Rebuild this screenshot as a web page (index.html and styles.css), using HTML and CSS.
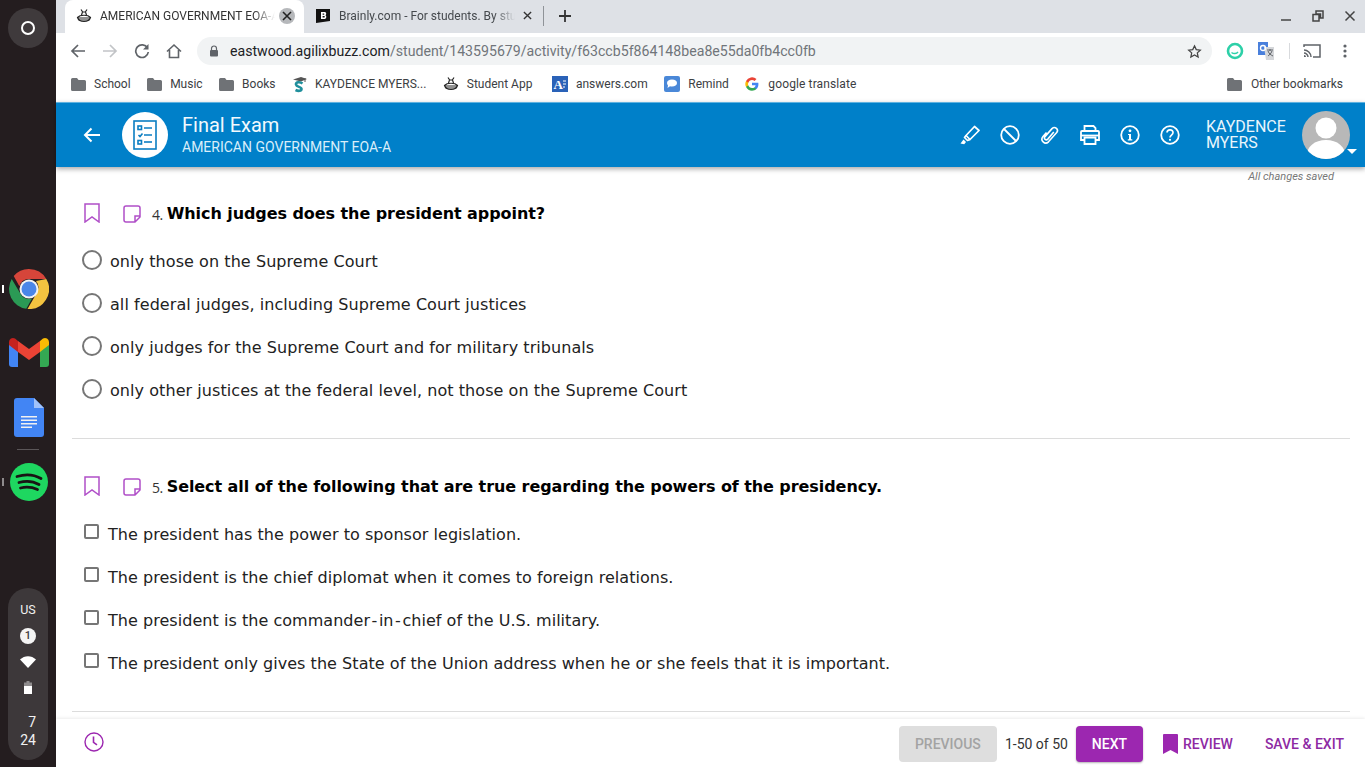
FILE: index.html
```html
<!DOCTYPE html>
<html lang="en">
<head>
<meta charset="utf-8">
<title>Final Exam</title>
<link rel="stylesheet" href="styles.css">
</head>
<body>
<div class="screen">
  <aside class="shelf">
    <div class="launcher"><span class="launcher-ring"></span></div>
    <div class="pinned">
      <div class="app app-chrome">
        <span class="run-dot run-bright"></span>
        <svg width="40" height="40" viewBox="0 0 40 40"><path d="M20 0a20 20 0 0 1 17.300 10H20a10 10 0 0 0-9.600 7.200L4.700 7A20 20 0 0 1 20 0z" fill="#d6453a"/><path d="M2.700 10l9.700 16.200A10 10 0 0 0 23 29.500l-5.700 10.300A20 20 0 0 1 2.700 10z" fill="#2b9a55"/><path d="M37.300 10A20 20 0 0 1 18.500 40l9-15.500A10 10 0 0 0 27 12z" fill="#f3c340"/><circle cx="20" cy="20" r="9.500" fill="#f2f2f2"/><circle cx="20" cy="20" r="7.500" fill="#4a86e8"/></svg>
      </div>
      <div class="app app-gmail">
        <svg width="40" height="30" viewBox="0 0 40 30"><path d="M0 6v21a3 3 0 0 0 3 3h6V13z" fill="#4285f4"/><path d="M31 13v17h6a3 3 0 0 0 3-3V6z" fill="#34a853"/><path d="M9 4v11l11 8 11-8V4l-11 8z" fill="#ea4335"/><path d="M0 5v3l9 7V4L6 1.500A4 4 0 0 0 0 5z" fill="#c5221f"/><path d="M31 4v11l9-7V5a4 4 0 0 0-6-3.500z" fill="#fbbc04"/></svg>
      </div>
      <div class="app app-docs">
        <svg width="30" height="39" viewBox="0 0 30 39"><path d="M3 0h17l10 10v26a3 3 0 0 1-3 3H3a3 3 0 0 1-3-3V3a3 3 0 0 1 3-3z" fill="#4285f4"/><path d="M20 0l10 10H20z" fill="#a1c2fa"/><path d="M7 18h16v1.500H7zM7 21.500h16V23H7zM7 25h16v1.500H7zM7 28.500h11V30H7z" fill="#f1f1f1"/></svg>
      </div>
      <div class="shelf-rule"></div>
      <div class="app app-spotify">
        <span class="run-dot"></span>
        <svg width="38" height="38" viewBox="0 0 38 38"><circle cx="19" cy="19" r="19" fill="#1ed760"/><path d="M7 13.500c8-2.500 17-2 24 2M9 19.500c7-2 14-1.500 20 2M10.500 25c6-1.500 11.500-1 17 1.500" fill="none" stroke="#191414" stroke-width="2.800" stroke-linecap="round"/></svg>
      </div>
    </div>
    <div class="status">
      <span class="status-us">US</span>
      <span class="status-badge">1</span>
      <svg class="status-wifi" width="16" height="12" viewBox="0 0 16 12"><path d="M0 3.500C4.500-1 11.500-1 16 3.500L8 12z" fill="#fff"/></svg>
      <svg class="status-batt" width="8" height="13" viewBox="0 0 8 13"><path d="M2.500 0h3v1.500H8V13H0V1.500h2.500z" fill="#8f8c8d"/><path d="M0 5h8v8H0z" fill="#fff"/></svg>
      <span class="status-time">7<br>24</span>
    </div>
  </aside>

  <div class="desktop">
    <div class="tabstrip">
      <div class="tab tab-active">
        <svg class="tab-icon" width="16" height="16" viewBox="0 0 16 16"><g fill="none" stroke="#222" stroke-width="1.200"><path d="M5 1.500l2 3M11 1.500l-2 3M5.500 7L6.500 4h3l1 3"/><path d="M1.500 9.500C4 6.500 12 6.500 14.500 9.500c-1 2.800-3.500 4-6.500 4s-5.500-1.200-6.500-4z"/><path d="M2 10h12M2.500 12h11"/></g></svg>
        <span class="tab-title">AMERICAN GOVERNMENT EOA-A</span>
        <span class="tab-close tab-close-hover">
          <svg width="10" height="10" viewBox="0 0 10 10"><path d="M1 1l8 8M9 1l-8 8" stroke="#222" stroke-width="1.600"/></svg>
        </span>
      </div>
      <div class="tab">
        <svg class="tab-icon" width="16" height="16" viewBox="0 0 16 16"><path d="M1 1h14v12l-14 2z" fill="#111"/><path d="M6 4h3.500c2 0 2.200 2.600.8 3.200 1.600.6 1.400 3.800-1 3.800H6zM7.600 5.500v1.200h1.200c.8 0 .8-1.200 0-1.200zM7.600 8v1.500h1.500c1 0 1-1.500 0-1.500z" fill="#fff"/></svg>
        <span class="tab-title tab-title-dim">Brainly.com - For students. By students.</span>
        <span class="tab-close">
          <svg width="10" height="10" viewBox="0 0 10 10"><path d="M1 1l8 8M9 1l-8 8" stroke="#333" stroke-width="1.500"/></svg>
        </span>
      </div>
      <span class="tab-sep"></span>
      <svg class="new-tab" width="14" height="14" viewBox="0 0 14 14"><path d="M7 1v12M1 7h12" stroke="#333" stroke-width="1.800"/></svg>
      <div class="window-controls">
        <svg width="12" height="12" viewBox="0 0 12 12"><path d="M1 10h10" stroke="#444" stroke-width="1.500"/></svg>
        <svg width="12" height="12" viewBox="0 0 12 12"><path d="M4 1h7v7H8.500V4H4zM1 4.500h6V11H1z" fill="none" stroke="#444" stroke-width="1.500"/></svg>
        <svg width="12" height="12" viewBox="0 0 12 12"><path d="M1.500 1.500l9 9M10.500 1.500l-9 9" stroke="#444" stroke-width="1.500"/></svg>
      </div>
    </div>

    <div class="toolbar">
      <svg class="nav-icon" width="16" height="16" viewBox="0 0 16 16"><path d="M15 8H2M8 2L2 8l6 6" fill="none" stroke="#5f6368" stroke-width="1.700"/></svg>
      <svg class="nav-icon" width="16" height="16" viewBox="0 0 16 16"><path d="M1 8h13M8 2l6 6-6 6" fill="none" stroke="#c2c4c7" stroke-width="1.700"/></svg>
      <svg class="nav-icon" width="16" height="16" viewBox="0 0 16 16"><path d="M13.500 5A6.300 6.300 0 1 0 14.300 9" fill="none" stroke="#5f6368" stroke-width="1.700"/><path d="M14.500 1v5.500H9z" fill="#5f6368"/></svg>
      <svg class="nav-icon" width="16" height="16" viewBox="0 0 16 16"><path d="M1 8.500L8 2l7 6.500M3.500 7v7.500h9V7" fill="none" stroke="#5f6368" stroke-width="1.600"/></svg>
      <div class="omnibox">
        <svg width="10" height="12" viewBox="0 0 10 12"><path d="M2.500 5V3.500a2.500 2.500 0 0 1 5 0V5" fill="none" stroke="#5f6368" stroke-width="1.200"/><rect x="1" y="5" width="8" height="6.500" rx="1" fill="#5f6368"/></svg>
        <span class="url"><span class="url-host">eastwood.agilixbuzz.com</span>/student/143595679/activity/f63ccb5f864148bea8e55da0fb4cc0fb</span>
        <svg class="star" width="15" height="15" viewBox="0 0 24 24"><path d="M12 3l2.800 6 6.500.8-4.800 4.400 1.300 6.500L12 17.400l-5.800 3.300 1.300-6.500-4.800-4.400 6.500-.8z" fill="none" stroke="#444" stroke-width="2"/></svg>
      </div>
      <div class="extensions">
        <svg width="18" height="18" viewBox="0 0 18 18"><circle cx="9" cy="9" r="7" fill="none" stroke="#2dd0a8" stroke-width="2.600"/><path d="M5.500 10.500c2 1.500 5 1.500 6.500-.5" fill="none" stroke="#2dd0a8" stroke-width="1.500"/></svg>
        <svg width="18" height="18" viewBox="0 0 18 18"><path d="M1 0h10v13H1z" fill="#4a80dc"/><path d="M7 5h10v13H9z" fill="#d5d7da"/><circle cx="6" cy="6" r="2.500" fill="none" stroke="#fff" stroke-width="1.300"/><path d="M10 8h6M13 7v2M11 9c1 3 3 4 5 5M15 9c-1 3-3 4-4 5" stroke="#5f6368" stroke-width="1" fill="none"/></svg>
        <span class="ext-sep"></span>
        <svg width="18" height="14" viewBox="0 0 18 14"><path d="M1 3V1h16v12h-7M1 6c3.500 0 7 3 7 7M1 9c2 0 4 2 4 4" fill="none" stroke="#5f6368" stroke-width="1.500"/><path d="M1 11a2 2 0 0 1 2 2H1z" fill="#5f6368"/></svg>
        <svg class="kebab" width="4" height="14" viewBox="0 0 4 14"><circle cx="2" cy="2" r="1.600" fill="#5f6368"/><circle cx="2" cy="7" r="1.600" fill="#5f6368"/><circle cx="2" cy="12" r="1.600" fill="#5f6368"/></svg>
      </div>
    </div>

    <div class="bookmarks">
      <span class="bm"><svg width="15" height="13" viewBox="0 0 15 13"><path d="M0 1.500A1.500 1.500 0 0 1 1.500 0H6l1.500 2h6A1.500 1.500 0 0 1 15 3.500v8a1.500 1.500 0 0 1-1.500 1.500h-12A1.500 1.500 0 0 1 0 11.500z" fill="#6f7276"/></svg>School</span>
      <span class="bm"><svg width="15" height="13" viewBox="0 0 15 13"><path d="M0 1.500A1.500 1.500 0 0 1 1.500 0H6l1.500 2h6A1.500 1.500 0 0 1 15 3.500v8a1.500 1.500 0 0 1-1.500 1.500h-12A1.500 1.500 0 0 1 0 11.500z" fill="#6f7276"/></svg>Music</span>
      <span class="bm"><svg width="15" height="13" viewBox="0 0 15 13"><path d="M0 1.500A1.500 1.500 0 0 1 1.500 0H6l1.500 2h6A1.500 1.500 0 0 1 15 3.500v8a1.500 1.500 0 0 1-1.500 1.500h-12A1.500 1.500 0 0 1 0 11.500z" fill="#6f7276"/></svg>Books</span>
      <span class="bm"><svg width="15" height="17" viewBox="0 0 15 17"><path d="M1 3.500L9 1l6 2-6 2.500z" fill="#555"/><path d="M13 2v4" stroke="#555"/><path d="M10.500 7.500C8 5.500 3.500 6 4 8.500c.6 2.800 5.500 2 5.500 4.500 0 2-3 2.500-6 1" fill="none" stroke="#1f8f9c" stroke-width="2.600"/></svg>KAYDENCE MYERS...</span>
      <span class="bm"><svg width="16" height="16" viewBox="0 0 16 16"><g fill="none" stroke="#222" stroke-width="1.200"><path d="M5 1.500l2 3M11 1.500l-2 3M5.500 7L6.500 4h3l1 3"/><path d="M1.500 9.500C4 6.500 12 6.500 14.500 9.500c-1 2.800-3.500 4-6.500 4s-5.500-1.200-6.500-4z"/><path d="M2 10h12M2.500 12h11"/></g></svg>Student App</span>
      <span class="bm bm-answers"><svg width="16" height="16" viewBox="0 0 16 16"><rect width="16" height="16" fill="#2a62b8"/><path d="M11 5h3M11 8h3M11 11h2" stroke="#fff" stroke-width="1"/><text class="answers-a" x="1.500" y="13">A</text></svg>answers.com</span>
      <span class="bm"><svg width="16" height="16" viewBox="0 0 16 16"><rect width="16" height="16" rx="2" fill="#4a88d8"/><path d="M3 7c0-2 2-3.500 5-3.500S13 5 13 7 11 10.500 8 10.500c-.8 0-1.400 0-2-.2L3.500 12 4 9.500C3.400 8.800 3 8 3 7z" fill="#fff"/></svg>Remind</span>
      <span class="bm"><svg width="14" height="14" viewBox="0 0 24 24"><path d="M23 12.300c0-.8-.1-1.600-.2-2.300H12v4.300h6.200a5.300 5.300 0 0 1-2.300 3.500v2.900h3.700c2.100-2 3.400-4.900 3.400-8.400z" fill="#4285f4"/><path d="M12 23.500c3.100 0 5.700-1 7.600-2.800l-3.700-2.900c-1 .7-2.300 1.100-3.900 1.100-3 0-5.500-2-6.400-4.700H1.800v3A11.500 11.500 0 0 0 12 23.500z" fill="#34a853"/><path d="M5.600 14.200a7 7 0 0 1 0-4.400v-3H1.800a11.500 11.500 0 0 0 0 10.400z" fill="#fbbc05"/><path d="M12 5c1.700 0 3.200.6 4.400 1.700l3.300-3.300A11.500 11.500 0 0 0 1.800 6.800l3.800 3C6.500 7 9 5 12 5z" fill="#ea4335"/></svg><span class="bm-google">google translate</span></span>
      <span class="bm bm-other"><svg width="15" height="13" viewBox="0 0 15 13"><path d="M0 1.500A1.500 1.500 0 0 1 1.500 0H6l1.500 2h6A1.500 1.500 0 0 1 15 3.500v8a1.500 1.500 0 0 1-1.500 1.500h-12A1.500 1.500 0 0 1 0 11.500z" fill="#6f7276"/></svg>Other bookmarks</span>
    </div>

    <header class="apphead">
      <svg class="back" width="18" height="16" viewBox="0 0 18 16"><path d="M17 8H2M8.500 1.500L2 8l6.500 6.500" fill="none" stroke="#fff" stroke-width="2"/></svg>
      <div class="head-logo">
        <svg width="24" height="30" viewBox="0 0 24 30"><g fill="none" stroke="#0a7ec2" stroke-width="1.600"><rect x="1" y="1" width="22" height="28"/><rect x="5" y="6" width="3.500" height="3.500"/><path d="M11 8h8M5.500 15l1.500 1.500 2.500-3M11 15h8"/><rect x="5" y="20.500" width="3.500" height="3.500"/><path d="M11 22h8"/></g></svg>
      </div>
      <div class="head-titles">
        <div class="head-title">Final Exam</div>
        <div class="head-sub">AMERICAN GOVERNMENT EOA-A</div>
      </div>
      <div class="head-tools">
        <svg width="20" height="20" viewBox="0 0 20 20"><g fill="none" stroke="#fff" stroke-width="1.700" stroke-linejoin="round"><path d="M6 10.500L14.500 1.500 19 5.500 10 14.500z"/><path d="M6 10.500L4.500 12.500 7.500 15.500 10 14.500"/></g><path d="M3.500 14.500L.500 18.500l3.700.7L6 17z" fill="#fff"/></svg>
        <svg width="20" height="20" viewBox="0 0 20 20"><circle cx="10" cy="10" r="8.800" fill="none" stroke="#fff" stroke-width="1.800"/><path d="M4 4l12 12" stroke="#fff" stroke-width="1.800"/></svg>
        <svg width="20" height="20" viewBox="0 0 20 20"><path d="M6.500 7.500L3 11.500c-3.200 3.800 1.800 8.800 5.500 5.300l8-9c2.800-3.300-1.500-7-4.500-4.200l-7 8c-1.700 2.200 1 4.200 2.800 2.500l6-7" fill="none" stroke="#fff" stroke-width="1.600"/></svg>
        <svg width="20" height="20" viewBox="0 0 20 20"><g fill="none" stroke="#fff" stroke-width="1.800"><path d="M4.500 6V1h9l2 2v3"/><path d="M4.500 15H1V7a1 1 0 0 1 1-1h16a1 1 0 0 1 1 1v8h-3.500"/><path d="M1 10.500h18"/><path d="M4.500 12.500h11V19h-11z"/></g></svg>
        <svg width="20" height="20" viewBox="0 0 20 20"><circle cx="10" cy="10" r="8.800" fill="none" stroke="#fff" stroke-width="1.800"/><circle cx="10" cy="5.800" r="1.400" fill="#fff"/><path d="M8 9h3v5.300h1.300V15.500H7.800v-1.200H9V10H8z" fill="#fff"/></svg>
        <svg width="20" height="20" viewBox="0 0 20 20"><circle cx="10" cy="10" r="8.800" fill="none" stroke="#fff" stroke-width="1.800"/><path d="M7 7.500c.2-3.800 6.300-3.500 6 .3-.2 2.400-3 2.200-3 4.700" fill="none" stroke="#fff" stroke-width="1.700"/><circle cx="10" cy="14.800" r="1.100" fill="#fff"/></svg>
      </div>
      <div class="head-user">KAYDENCE<br>MYERS</div>
      <div class="avatar-wrap">
        <div class="avatar">
          <svg width="48" height="48" viewBox="0 0 48 48"><circle cx="24" cy="17" r="10.500" fill="#fff"/><path d="M4 48c0-13 9-19 20-19s20 6 20 19z" fill="#fff"/></svg>
        </div>
        <span class="avatar-caret"></span>
      </div>
    </header>

    <main class="content">
      <div class="saved">All changes saved</div>

      <section class="question q-first">
        <div class="q-head">
          <svg class="q-mark" width="16" height="20" viewBox="0 0 16 20"><path d="M1 1h14v18l-7-5-7 5z" fill="none" stroke="#b04fc8" stroke-width="1.500"/></svg>
          <svg class="q-note" width="18" height="18" viewBox="0 0 18 18"><path d="M3 1h12a2 2 0 0 1 2 2v9l-5 5H3a2 2 0 0 1-2-2V3a2 2 0 0 1 2-2zM17 11h-5v6" fill="none" stroke="#b04fc8" stroke-width="1.500"/></svg>
          <span class="q-num">4.</span>
          <span class="q-text">Which judges does the president appoint?</span>
        </div>
        <div class="opt"><span class="radio"></span><span class="opt-text">only those on the Supreme Court</span></div>
        <div class="opt"><span class="radio"></span><span class="opt-text">all federal judges, including Supreme Court justices</span></div>
        <div class="opt"><span class="radio"></span><span class="opt-text">only judges for the Supreme Court and for military tribunals</span></div>
        <div class="opt"><span class="radio"></span><span class="opt-text">only other justices at the federal level, not those on the Supreme Court</span></div>
      </section>

      <section class="question">
        <div class="q-head">
          <svg class="q-mark" width="16" height="20" viewBox="0 0 16 20"><path d="M1 1h14v18l-7-5-7 5z" fill="none" stroke="#b04fc8" stroke-width="1.500"/></svg>
          <svg class="q-note" width="18" height="18" viewBox="0 0 18 18"><path d="M3 1h12a2 2 0 0 1 2 2v9l-5 5H3a2 2 0 0 1-2-2V3a2 2 0 0 1 2-2zM17 11h-5v6" fill="none" stroke="#b04fc8" stroke-width="1.500"/></svg>
          <span class="q-num">5.</span>
          <span class="q-text">Select all of the following that are true regarding the powers of the presidency.</span>
        </div>
        <div class="opt opt-check"><span class="check"></span><span class="opt-text">The president has the power to sponsor legislation.</span></div>
        <div class="opt opt-check"><span class="check"></span><span class="opt-text">The president is the chief diplomat when it comes to foreign relations.</span></div>
        <div class="opt opt-check"><span class="check"></span><span class="opt-text">The president is the commander<span class="hy">-</span>in<span class="hy">-</span>chief of the U.S. military.</span></div>
        <div class="opt opt-check"><span class="check"></span><span class="opt-text">The president only gives the State of the Union address when he or she feels that it is important.</span></div>
      </section>
    </main>

    <footer class="footer">
      <svg class="clock" width="20" height="20" viewBox="0 0 20 20"><circle cx="10" cy="10" r="9" fill="none" stroke="#9c27b0" stroke-width="1.400"/><path d="M9.500 4.500v5.800l3.500 2.500" fill="none" stroke="#9c27b0" stroke-width="1.600"/></svg>
      <button class="btn-prev" type="button">PREVIOUS</button>
      <span class="page-count">1-50 of 50</span>
      <button class="btn-next" type="button">NEXT</button>
      <span class="link-review"><svg width="15" height="20" viewBox="0 0 15 20"><path d="M0 1a1 1 0 0 1 1-1h13a1 1 0 0 1 1 1v19l-7.500-4L0 20z" fill="#9c27b0"/></svg>REVIEW</span>
      <span class="link-save">SAVE &amp; EXIT</span>
    </footer>
  </div>
</div>
</body>
</html>
```
FILE: styles.css
```css
* { box-sizing: border-box; }
html, body { margin: 0; height: 100%; overflow: hidden; }
body { font-family: Roboto, "Liberation Sans", sans-serif; background: #fff; }
svg { display: block; flex: none; }

.screen { display: flex; width: 1365px; height: 767px; overflow: hidden; }

/* Shelf */
.shelf { width: 56px; flex: none; background: #241d1f; display: flex; flex-direction: column; align-items: center; position: relative; }
.launcher { width: 40px; height: 40px; margin-top: 8px; border-radius: 50%; background: #3f3a3c; display: flex; align-items: center; justify-content: center; }
.launcher-ring { width: 14px; height: 14px; border: 2px solid #fff; border-radius: 50%; }
.pinned { margin-top: 221px; display: flex; flex-direction: column; align-items: center; width: 100%; }
.app { position: relative; display: flex; justify-content: center; width: 100%; padding-left: 2px; }
.app-gmail { margin-top: 28px; }
.app-docs { margin-top: 31px; }
.shelf-rule { width: 22px; height: 1px; background: #5b5658; margin: 12px 0 13px; }
.run-dot { position: absolute; left: 2px; top: 50%; width: 2px; height: 8px; margin-top: -4px; background: #8e8b8c; }
.run-bright { background: #fff; }
.status { position: absolute; left: 8px; top: 588px; width: 40px; height: 172px; border-radius: 20px; background: #3d383a; color: #f1f1f1; display: flex; flex-direction: column; align-items: center; font-size: 12.500px; }
.status-us { margin-top: 14px; line-height: 16px; }
.status-badge { width: 16px; height: 16px; margin-top: 10px; border-radius: 50%; background: #f4f4f4; color: #3d383a; font-size: 11px; font-weight: 500; line-height: 16px; text-align: center; }
.status-wifi { margin-top: 12px; }
.status-batt { margin-top: 13px; }
.status-time { align-self: flex-end; margin-top: 19px; margin-right: 12px; font-size: 14px; line-height: 18px; text-align: right; }

/* Browser chrome */
.desktop { flex: 1; min-width: 0; display: flex; flex-direction: column; }
.tabstrip { height: 33px; flex: none; background: #dee1e6; display: flex; align-items: flex-start; padding-left: 9px; }
.tab { width: 240px; height: 33px; display: flex; align-items: center; padding: 0 9px 2px 11px; font-size: 12px; color: #3c4043; position: relative; }
.tab-active { width: 239px; background: #fff; border-radius: 8px 8px 0 0; color: #333; }
.tab-icon { margin-right: 8px; }
.tab-title { flex: 1; min-width: 0; white-space: nowrap; overflow: hidden; -webkit-mask-image: linear-gradient(to right, #000 88%, transparent); mask-image: linear-gradient(to right, #000 88%, transparent); }
.tab-title-dim { color: #45494d; }
.tab-close { width: 16px; height: 16px; margin-left: 4px; border-radius: 50%; display: flex; align-items: center; justify-content: center; flex: none; }
.tab-close-hover { background: #b6b8bb; }
.tab:not(.tab-active) .tab-close svg { width: 9px; height: 9px; }
.tab-sep { width: 1px; height: 20px; margin-top: 6px; background: #8f9398; margin-left: -1px; }
.new-tab { margin: 9px 0 0 14px; }
.window-controls { margin-left: auto; display: flex; gap: 20px; padding: 10px 9px 0 0; }

.toolbar { height: 34px; flex: none; background: #fff; display: flex; align-items: center; padding: 2px 0 0 14px; }
.nav-icon { margin-right: 16px; }
.omnibox { width: 1015px; height: 28px; margin-left: -1px; border-radius: 14px; background: #f1f3f4; display: flex; align-items: center; padding: 0 10px 0 12px; font-size: 14.150px; color: #70757a; }
.url { margin-left: 11px; flex: 1; white-space: nowrap; }
.url-host { color: #202124; }
.extensions { display: flex; align-items: center; margin-left: 14px; }
.extensions svg:nth-child(2) { margin-left: 13px; }
.ext-sep { width: 1px; height: 16px; background: #d8dadd; margin: 0 13px 0 14px; }
.kebab { margin-left: 22px; }

.bookmarks { height: 35px; flex: none; background: #fff; display: flex; align-items: center; padding: 0 0 1px 15px; font-size: 12px; color: #3c4043; }
.bm { display: flex; align-items: center; gap: 8px; margin-right: 16.500px; white-space: nowrap; }
.bm-answers { margin-left: 3px; }
.answers-a { font: bold 13px "Liberation Serif", serif; fill: #fff; }
.bm-google { letter-spacing: .12px; margin-left: 1px; }
.bm-other { margin-left: auto; margin-right: 22px; gap: 9px; }

/* App header */
.apphead { height: 65px; flex: none; background: #0080c9; border-top: 1px solid #5fb2e0; box-shadow: 0 2px 5px rgba(0,0,0,.35); display: flex; align-items: center; color: #fff; padding-left: 27px; position: relative; z-index: 2; }
.back { margin-right: 21px; }
.head-logo { width: 46px; height: 46px; border-radius: 50%; background: #fff; display: flex; align-items: center; justify-content: center; flex: none; }
.head-titles { margin-left: 14px; padding-bottom: 2px; }
.head-title { font-size: 20px; line-height: 24px; color: #f2f9fd; }
.head-sub { font-size: 14px; line-height: 18px; margin-top: 1px; color: #d9eefa; }
.head-tools { margin-left: auto; display: flex; align-items: center; gap: 20px; }
.head-user { margin-left: 26px; font-size: 16px; line-height: 16px; width: 96px; color: #eaf6fc; white-space: nowrap; }
.avatar-wrap { position: relative; margin-right: 15px; }
.avatar { width: 48px; height: 48px; border-radius: 50%; background: #b8b8b8; overflow: hidden; }
.avatar-caret { position: absolute; right: -7px; bottom: 5px; width: 0; height: 0; border-left: 5px solid transparent; border-right: 5px solid transparent; border-top: 5px solid #fff; }

/* Content */
.content { flex: 1; min-height: 0; overflow: hidden; background: #fff; padding: 0 15px 0 16px; position: relative; }
.saved { position: absolute; right: 31px; top: 3px; font-size: 11px; font-style: italic; color: #777; line-height: 13px; }
.question { border-bottom: 1px solid #dcdcdc; height: 273px; padding-top: 37px; }
.q-first { height: 272px; padding-top: 36px; }
.q-head { display: flex; align-items: center; height: 20px; padding-left: 12px; }
.q-note { margin-left: 23px; margin-top: 2px; }
.q-num { margin-left: 11px; font: 14px "Open Sans", "Noto Sans", sans-serif; letter-spacing: -0.5px; color: #333; margin-top: 2px; }
.q-text { margin-left: 4px; font: bold 16px "DejaVu Sans", sans-serif; color: #000; letter-spacing: -0.07px; white-space: nowrap; }
.opt { display: flex; align-items: center; height: 43px; padding-left: 10px; font: 16px "DejaVu Sans", sans-serif; color: #222; letter-spacing: 0.065px; white-space: nowrap; }
.opt-check { letter-spacing: 0.04px; }
.q-head + .opt { margin-top: 16px; }
.opt-text { margin-top: 2px; }
.hy { padding: 0 1.500px; }
.radio { width: 20px; height: 20px; border: 2px solid #767676; border-radius: 50%; margin-right: 8px; margin-top: -2px; background: #fff; flex: none; }
.check { width: 15px; height: 15px; border: 2px solid #767676; border-radius: 2px; margin: -4px 9px 0 2px; background: #fff; flex: none; }

/* Footer */
.footer { height: 48px; flex: none; background: #fff; box-shadow: 0 -1px 3px rgba(0,0,0,.08); display: flex; align-items: center; padding: 0 21px 0 28px; position: relative; z-index: 1; font-size: 14px; }
.clock { margin-right: auto; margin-top: -2px; }
.btn-prev, .btn-next { font: 500 14px Roboto, sans-serif; border: 0; border-radius: 4px; height: 36px; padding: 0; }
.btn-prev { width: 98px; background: #dedede; color: #a3a3a3; margin-top: 1px; }
.page-count { margin: 1px 8px 0 8px; color: #333; }
.btn-next { width: 67px; background: #9c27b0; color: #fff; box-shadow: 0 1px 2px rgba(0,0,0,.3); margin-top: 1px; }
.link-review { display: flex; align-items: center; gap: 5px; margin-left: 20px; color: #8e2aa3; font-weight: 500; margin-top: 1px; }
.link-save { margin-left: 32px; color: #8e2aa3; font-weight: 500; margin-top: 1px; }
```
